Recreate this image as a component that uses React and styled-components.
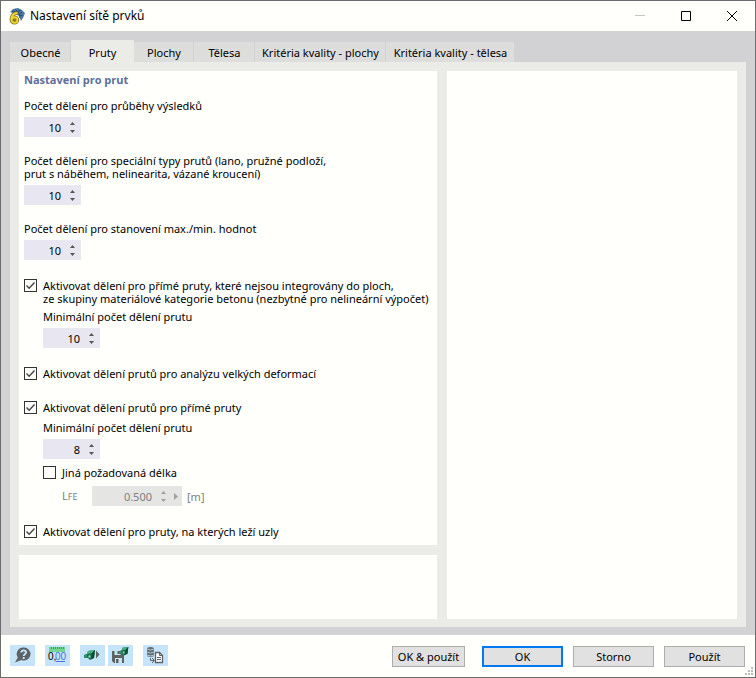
import React, { useState } from 'react';
import styled, { createGlobalStyle } from 'styled-components';

const GlobalStyle = createGlobalStyle`
    * { box-sizing: border-box; }
    body { margin: 0; background: #fffffc; }
    button, input { font: inherit; color: inherit; }
`;
const Window = styled.div`
    display: flex;
    flex-direction: column;
    min-height: 100vh;
    border: 1px solid #6c6c6c;
    background: #fffffc;
    color: #000;
    font-family: "Noto Sans", "Open Sans", sans-serif;
    font-size: 11px; line-height: 13px;
    user-select: none;
`;
const TitleBar = styled.header`
    display: flex;
    align-items: center;
    height: 30px;
    padding-left: 7px;
`;
const Title = styled.h1`
    flex: 1;
    margin: 0 0 0 5px;
    font-size: 12px; line-height: 16px;
    font-weight: 400;
`;
const CaptionButton = styled.button`
    display: flex;
    align-items: center;
    justify-content: center;
    width: 46px;
    height: 28px;
    padding: 0;
    background: transparent;
    border: none;
    &:hover:enabled { background: #e5e5e5; }
`;
const Body = styled.main`
    flex: 1;
    display: flex;
    flex-direction: column;
    padding: 9px 9px 8px;
    background: #d2d2d5;
`;
const TabList = styled.div`
    display: flex;
    align-items: flex-end;
`;
const Tab = styled.button`
    height: ${p => (p.$active ? 22 : 20)}px;
    min-width: ${p => p.$width}px;
    padding: ${p => (p.$active ? 2 : 0)}px 0 0 1px;
    background: ${p => (p.$active ? '#ebece8' : '#dddddc')};
    border: none;
    border-right: 1px solid ${p => (p.$active ? '#ebece8' : '#d2d2d5')};
    &:last-child { border-right: none; }
`;
const Page = styled.div`
    flex: 1;
    display: grid;
    grid-template-columns: minmax(0, 418fr) minmax(0, 290fr);
    gap: 10px;
    padding: 9px 9px 8px;
    background: #ebece8;
`;
const Column = styled.div`
    display: flex;
    flex-direction: column;
    gap: 10px;
`;
const Panel = styled.section`
    flex: 1;
    padding: 2px 5px 7px;
    background: #fffffc;
`;
const NotePanel = styled.section`
    height: 64px;
    background: #fffffc;
`;
const Heading = styled.h2`
    margin: 0 0 13px;
    color: #5b6f9a;
    font-family: "Open Sans", "Noto Sans", sans-serif;
    font-size: 11px; line-height: 13px;
    font-weight: 700;
`;
const Field = styled.div`
    display: flex;
    flex-direction: column;
    align-items: flex-start;
    gap: 5px;
    margin-bottom: ${p => p.$after || 0}px;
`;
const Nested = styled.div`
    display: flex;
    flex-direction: column;
    gap: 7px;
    margin: ${p => p.$before}px 0 19px 19px;
`;
const SpinBox = styled.div`
    display: flex;
    align-items: center;
    width: ${p => (p.$wide ? 90 : 57)}px;
    height: 20px;
    padding-right: ${p => (p.$wide ? 3 : 0)}px;
    background: ${p => (p.$disabled ? '#e5e5e4' : '#e8e7f1')};
    color: ${p => (p.$disabled ? '#808080' : '#000')};
`;
const SpinInput = styled.input`
    flex: 1;
    min-width: 0;
    height: 20px;
    padding: 0;
    background: transparent;
    border: none;
    outline: none;
    text-align: right;
`;
const Steps = styled.div`
    display: flex;
    flex-direction: column;
    gap: 3px;
    margin: 0 5px 0 8px;
`;
const StepButton = styled.button`
    display: flex;
    align-items: center;
    justify-content: center;
    width: 7px;
    height: 5px;
    padding: 0;
    background: transparent;
    border: none;
    color: ${p => (p.disabled ? '#a0a0a0' : '#555')};
`;
const CheckLabel = styled.label`
    display: flex;
    align-items: flex-start;
    gap: 6px;
    margin-bottom: ${p => p.$after || 0}px;
`;
const CheckInput = styled.input`
    flex: none;
    appearance: none;
    width: 13px;
    height: 13px;
    margin: 0;
    border: 1px solid #333;
    background: #fffffc;
    &:checked {
        background: #fffffc url("data:image/svg+xml,%3Csvg xmlns='http://www.w3.org/2000/svg' viewBox='0 0 11 11'%3E%3Cpath d='M1.5 5.5l2.7 2.7 5.3-5.7' fill='none' stroke='%23444' stroke-width='1.4'/%3E%3C/svg%3E");
    }
`;
const LengthRow = styled.div`
    display: flex;
    align-items: center;
    padding-left: 19px;
    color: #808080;
`;
const LengthLabel = styled.label`
    width: 30px;
    small { font-size: 9px; }
`;
const Unit = styled.span`
    margin-left: 5px;
`;
const Footer = styled.footer`
    position: relative;
    display: flex;
    align-items: flex-start;
    height: 42px;
    padding: 10px 10px 0 9px;
`;
const ToolGroup = styled.div`
    display: flex;
    gap: 3px;
    margin-right: 10px;
`;
const ToolButton = styled.button`
    width: 25px;
    height: 21px;
    padding: 0;
    background: #c5e3f9;
    border: none;
    svg { display: block; }
`;
const Actions = styled.div`
    display: flex;
    gap: 10px;
    margin: 1px 0 0 auto;
`;
const ActionButton = styled.button`
    min-width: ${p => (p.$wide ? 73 : 81)}px;
    height: 21px;
    margin-right: ${p => (p.$wide ? 7 : 0)}px;
    padding: 0;
    background: #e1e1e1;
    border: ${p => (p.$primary ? '2px solid #0078f0' : '1px solid #adadad')};
`;
const Grip = styled.svg`
    position: absolute;
    right: 2px;
    bottom: 2px;
`;

const TABS = [
    { name: 'Obecné', width: 61 },
    { name: 'Pruty', width: 63 },
    { name: 'Plochy', width: 60 },
    { name: 'Tělesa', width: 61 },
    { name: 'Kritéria kvality - plochy', width: 131 },
    { name: 'Kritéria kvality - tělesa', width: 128 },
];

const Arrow = ({ d, width = 5, height = 3 }) => (
    <svg width={width} height={height} aria-hidden="true"><path d={d} fill="currentColor" /></svg>
);

const Spin = ({ id, initial, step = 1, digits = 0, disabled, wide }) => {
    const [value, setValue] = useState(initial);
    const move = by => setValue(v => Math.max(0, Number(v) + by).toFixed(digits));
    return (
        <SpinBox $wide={wide} $disabled={disabled}>
            <SpinInput
                id={id}
                value={value}
                disabled={disabled}
                onChange={e => setValue(e.target.value)}
            />
            <Steps>
                <StepButton aria-label="+" disabled={disabled} onClick={() => move(step)}>
                    <Arrow d="M0 3L2.5 0L5 3z" />
                </StepButton>
                <StepButton aria-label="-" disabled={disabled} onClick={() => move(-step)}>
                    <Arrow d="M0 0L2.5 3L5 0z" />
                </StepButton>
            </Steps>
            {wide && (
                <StepButton aria-label="›" disabled={disabled}>
                    <Arrow d="M0 0L4 3.5L0 7z" width={4} height={7} />
                </StepButton>
            )}
        </SpinBox>
    );
};

const Check = ({ checked, after, children }) => (
    <CheckLabel $after={after}>
        <CheckInput type="checkbox" defaultChecked={checked} />
        <span>{children}</span>
    </CheckLabel>
);

const AppIcon = () => (
    <svg width="17" height="17" viewBox="0 0 17 17">
        <path d="M2 4L5 1L10 0L14 2L17 5L15 10L13 13L11 8L7 6z" fill="#4d7ba8" />
        <path d="M4 3l5 1 4-2M7 1l4 4 1 5M14 4l-3 3 4 1" stroke="#2b4d76" fill="none" />
        <path d="M9.500 5C5 5 3.500 8 3.500 12" stroke="#7c6f2a" strokeWidth="3.600" fill="none" />
        <ellipse cx="6.500" cy="12" rx="3" ry="2.800" stroke="#7c6f2a" strokeWidth="3.600" fill="none" />
        <path d="M9.500 5C5 5 3.500 8 3.500 12" stroke="#f0d62e" strokeWidth="2" fill="none" />
        <ellipse cx="6.500" cy="12" rx="3" ry="2.800" stroke="#f0d62e" strokeWidth="1.900" fill="#8b7b25" />
    </svg>
);

const HelpIcon = () => (
    <svg width="25" height="21" viewBox="0 0 25 21">
        <path d="M14 2.500a6.500 6.500 0 1 1-2.500 12.500L5 17.500l2.800-5A6.500 6.500 0 0 1 14 2.500z" fill="#5d6265" />
        <path d="M11.300 7.500c.3-2.900 5-2.700 4.700.2c-.2 1.500-2.300 1.500-2.300 3.300M13.700 12v2" stroke="#c5e3f9" strokeWidth="1.900" fill="none" />
    </svg>
);

const UnitsIcon = () => (
    <svg width="25" height="21" viewBox="0 0 25 21" fontFamily="Liberation Sans, sans-serif" fontSize="10">
        <rect x="4" y="2" width="16" height="5" fill="#72d693" />
        <path d="M6.500 2v2M8.500 2v2M10.500 2v2M12.500 2v2M14.500 2v2M16.500 2v2M18.500 2v2" stroke="#3d9b60" />
        <text x="3" y="15" fill="#000">0,</text>
        <text x="10" y="15" fill="#4b76df">00</text>
        <path d="M11 16.500h9" stroke="#4b76df" />
    </svg>
);

const Cube = () => (
    <g>
        <path d="M0 5L3 4L4 1L11 0L10 8L6 10L4 8L0 8z" fill="#14734d" />
        <path d="M4 1L11 0L8 3L3 4z" fill="#4fae83" />
        <path d="M8 3L11 0L10 8L7 9z" fill="#0b4e35" />
        <path d="M4.500 5.500h2v2h-2z" fill="#a9dcc6" />
        <path d="M0 5L3 4L3 8L0 8z" fill="#2e9068" />
    </g>
);

const LoadIcon = () => (
    <svg width="25" height="21" viewBox="0 0 25 21">
        <g transform="translate(4 5)"><Cube /></g>
        <path d="M16 5.500L19.500 9.500L16 13.500z" fill="#5d6265" />
    </svg>
);

const SaveIcon = () => (
    <svg width="25" height="21" viewBox="0 0 25 21">
        <path d="M4 6h12v12H6l-2-2z" fill="#5d6265" />
        <path d="M6.500 6h6v4h-6zM7 13h7v5H7z" fill="#c5e3f9" />
        <path d="M8 14h2.500v4H8zM9.500 6h2v3h-2z" fill="#5d6265" />
        <g transform="translate(11 2) scale(.85)"><Cube /></g>
    </svg>
);

const ExportIcon = () => (
    <svg width="25" height="21" viewBox="0 0 25 21">
        <path d="M4 3q3.500-2 7 0v8q-3.500 2-7 0z" fill="#666b6e" />
        <path d="M4 4q3.500 2 7 0M4 7q3.500 2 7 0M4 10q3.500 2 7 0" stroke="#c5e3f9" strokeWidth=".8" fill="none" />
        <path d="M7.500 13v2.500h3.500M9 13l2.500 2.500l-2.500 2.500" stroke="#5d6265" fill="none" />
        <path d="M12.500 7.500h4l3 3v7h-7z" fill="#fff" stroke="#5d6265" strokeWidth="1.300" />
        <path d="M16.500 7.500v3h3" fill="none" stroke="#5d6265" />
        <path d="M14 12.500h4M14 14.500h4" stroke="#5d6265" />
    </svg>
);

const App = () => {
    const [tab, setTab] = useState('Pruty');
    return (
        <Window>
            <GlobalStyle />
            <TitleBar>
                <AppIcon />
                <Title>Nastavení sítě prvků</Title>
                <CaptionButton disabled aria-label="Minimalizovat">
                    <svg width="10" height="10"><path d="M0 4.500h10" stroke="#c4c7c2" /></svg>
                </CaptionButton>
                <CaptionButton aria-label="Maximalizovat">
                    <svg width="10" height="10"><path d="M.5.5h9v9h-9z" stroke="#000" fill="none" /></svg>
                </CaptionButton>
                <CaptionButton aria-label="Zavřít">
                    <svg width="10" height="10"><path d="M0 0l10 10M10 0l-10 10" stroke="#000" /></svg>
                </CaptionButton>
            </TitleBar>
            <Body>
                <TabList role="tablist">
                    {TABS.map(({ name, width }) => (
                        <Tab
                            key={name}
                            role="tab"
                            aria-selected={tab === name}
                            $active={tab === name}
                            $width={width}
                            onClick={() => setTab(name)}
                        >
                            {name}
                        </Tab>
                    ))}
                </TabList>
                <Page>
                    <Column>
                        <Panel>
                            <Heading>Nastavení pro prut</Heading>
                            <Field $after={17}>
                                <label htmlFor="results">Počet dělení pro průběhy výsledků</label>
                                <Spin id="results" initial="10" />
                            </Field>
                            <Field $after={17}>
                                <label htmlFor="special">
                                    Počet dělení pro speciální typy prutů (lano, pružné podloží,<br />
                                    prut s náběhem, nelinearita, vázané kroucení)
                                </label>
                                <Spin id="special" initial="10" />
                            </Field>
                            <Field $after={19}>
                                <label htmlFor="extremes">Počet dělení pro stanovení max./min. hodnot</label>
                                <Spin id="extremes" initial="10" />
                            </Field>
                            <Check checked>
                                Aktivovat dělení pro přímé pruty, které nejsou integrovány do ploch,<br />
                                ze skupiny materiálové kategorie betonu (nezbytné pro nelineární výpočet)
                            </Check>
                            <Nested $before={5}>
                                <Field>
                                    <label htmlFor="concrete">Minimální počet dělení prutu</label>
                                    <Spin id="concrete" initial="10" />
                                </Field>
                            </Nested>
                            <Check checked after={21}>Aktivovat dělení prutů pro analýzu velkých deformací</Check>
                            <Check checked>Aktivovat dělení prutů pro přímé pruty</Check>
                            <Nested $before={7}>
                                <Field>
                                    <label htmlFor="straight">Minimální počet dělení prutu</label>
                                    <Spin id="straight" initial="8" />
                                </Field>
                                <Check>Jiná požadovaná délka</Check>
                                <LengthRow>
                                    <LengthLabel htmlFor="length">L<small>FE</small></LengthLabel>
                                    <Spin id="length" initial="0.500" step={0.1} digits={3} disabled wide />
                                    <Unit>[m]</Unit>
                                </LengthRow>
                            </Nested>
                            <Check checked>Aktivovat dělení pro pruty, na kterých leží uzly</Check>
                        </Panel>
                        <NotePanel />
                    </Column>
                    <Panel />
                </Page>
            </Body>
            <Footer>
                <ToolGroup>
                    <ToolButton aria-label="Nápověda"><HelpIcon /></ToolButton>
                </ToolGroup>
                <ToolGroup>
                    <ToolButton aria-label="Jednotky"><UnitsIcon /></ToolButton>
                </ToolGroup>
                <ToolGroup>
                    <ToolButton aria-label="Načíst"><LoadIcon /></ToolButton>
                    <ToolButton aria-label="Uložit"><SaveIcon /></ToolButton>
                </ToolGroup>
                <ToolGroup>
                    <ToolButton aria-label="Export"><ExportIcon /></ToolButton>
                </ToolGroup>
                <Actions>
                    <ActionButton $wide>OK &amp; použít</ActionButton>
                    <ActionButton $primary>OK</ActionButton>
                    <ActionButton>Storno</ActionButton>
                    <ActionButton>Použít</ActionButton>
                </Actions>
                <Grip width="8" height="8" fill="#bdbdbd">
                    <path d="M6 0h2v2h-2zM3 3h2v2h-2zM6 3h2v2h-2zM0 6h2v2h-2zM3 6h2v2h-2zM6 6h2v2h-2z" />
                </Grip>
            </Footer>
        </Window>
    );
};

export default App;
